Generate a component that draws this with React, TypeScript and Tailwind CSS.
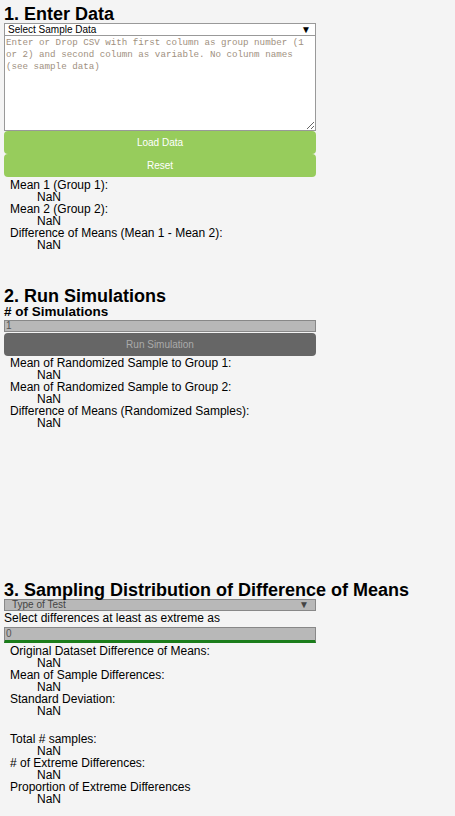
import React from "react";

const font = { fontFamily: '"Liberation Sans", Arial, sans-serif' };

function Stat({ label, value = "NaN" }: { label: string; value?: string }) {
  return (
    <>
      <div className="pl-[6px]">{label}</div>
      <div className="pl-[33px]">{value}</div>
    </>
  );
}

export default function App() {
  return (
    <div
      className="min-h-screen bg-[#f4f4f4] px-1 pt-[5px] text-black"
      style={font}
    >
      <div className="w-[312px]">
        {/* 1. Enter Data */}
        <h2 className="text-[18px] font-bold leading-[18px]">1. Enter Data</h2>
        <div className="flex h-[13px] items-center justify-between border border-[#999] bg-white pl-[3px] pr-[4px] text-[10px] leading-[11px]">
          <span>Select Sample Data</span>
          <span className="text-[10px]">▼</span>
        </div>
        <textarea
          className="block h-[95px] w-full resize border border-t-0 border-[#999] bg-white px-[1px] pt-[1px] text-[9.2px] leading-[12px] placeholder:text-[#a09080]"
          style={{ fontFamily: '"Liberation Mono", monospace' }}
          placeholder="Enter or Drop CSV with first column as group number (1 or 2) and second column as variable. No colunm names (see sample data)"
        />
        <button className="block h-[23px] w-full rounded-[4px] bg-[#97cc5c] text-[10px] text-white">
          Load Data
        </button>
        <button className="block h-[23px] w-full rounded-[4px] bg-[#97cc5c] text-[10px] text-white">
          Reset
        </button>
        <div className="mt-[2px] text-[12px] leading-[12px]">
          <Stat label="Mean 1 (Group 1):" />
          <Stat label="Mean 2 (Group 2):" />
          <Stat label="Difference of Means (Mean 1 - Mean 2):" />
        </div>

        {/* 2. Run Simulations */}
        <h2 className="mt-[36px] text-[18px] font-bold leading-[18px]">
          2. Run Simulations
        </h2>
        <h3 className="text-[13.5px] font-bold leading-[13px]">
          # of Simulations
        </h3>
        <div className="mt-[2px] flex h-[12px] items-center border border-[#888] bg-[#b8b8b8] pl-[1px] text-[10px] leading-[10px] text-[#555]">
          1
        </div>
        <button className="mt-[1px] block h-[23px] w-full rounded-[4px] bg-[#666666] text-[10px] text-[#aaaaaa]">
          Run Simulation
        </button>
        <div className="mt-[1px] text-[12px] leading-[12px]">
          <Stat label="Mean of Randomized Sample to Group 1:" />
          <Stat label="Mean of Randomized Sample to Group 2:" />
          <Stat label="Difference of Means (Randomized Samples):" />
        </div>

        {/* empty chart area */}
        <div className="h-[152px]" />

        {/* 3. Sampling Distribution */}
        <h2 className="w-[450px] text-[18px] font-bold leading-[18px]">
          3. Sampling Distribution of Difference of Means
        </h2>
        <div className="flex h-[12px] items-center justify-between border border-[#888] bg-[#b8b8b8] pl-[7px] pr-[6px] text-[10px] leading-[10px] text-[#444]">
          <span>Type of Test</span>
          <span className="text-[10px]">▼</span>
        </div>
        <div className="text-[12px] leading-[14px]">
          Select differences at least as extreme as
        </div>
        <div className="mt-[2px] flex h-[16px] items-center border border-b-[3px] border-[#888] border-b-[#1b7d1b] bg-[#b8b8b8] pl-[1px] text-[10px] leading-[10px] text-[#555]">
          0
        </div>
        <div className="mt-[2px] text-[12px] leading-[12px]">
          <Stat label="Original Dataset Difference of Means:" />
          <Stat label="Mean of Sample Differences:" />
          <Stat label="Standard Deviation:" />
          <div className="h-[16px]" />
          <Stat label="Total # samples:" />
          <Stat label="# of Extreme Differences:" />
          <Stat label="Proportion of Extreme Differences" />
        </div>
      </div>
    </div>
  );
}
